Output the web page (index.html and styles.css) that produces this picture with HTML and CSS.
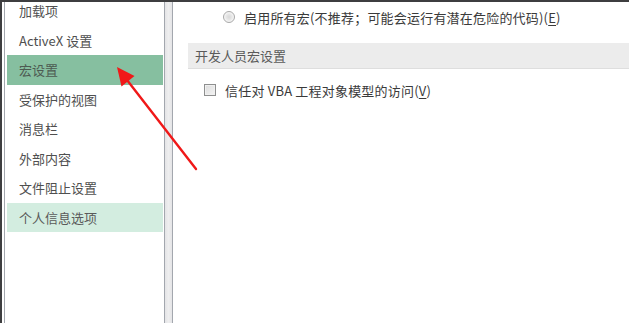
FILE: index.html
```html
<!DOCTYPE html>
<html lang="zh-CN">
<head>
<meta charset="utf-8">
<title>信任中心</title>
<link rel="stylesheet" href="styles.css">
</head>
<body>
<div class="frame">
  <div class="sidebar">
    <ul class="nav">
      <li class="nav-item">加载项</li>
      <li class="nav-item">ActiveX 设置</li>
      <li class="nav-item selected">宏设置</li>
      <li class="nav-item">受保护的视图</li>
      <li class="nav-item">消息栏</li>
      <li class="nav-item">外部内容</li>
      <li class="nav-item">文件阻止设置</li>
      <li class="nav-item hover">个人信息选项</li>
    </ul>
  </div>
  <div class="gutter"></div>
  <div class="main">
    <div class="option radio-row">
      <span class="radio"></span>
      <span class="label">启用所有宏(不推荐；可能会运行有潜在危险的代码)(<u>E</u>)</span>
    </div>
    <div class="section-header">开发人员宏设置</div>
    <div class="option check-row">
      <span class="checkbox"></span>
      <span class="label">信任对 VBA 工程对象模型的访问(<u>V</u>)</span>
    </div>
  </div>
  <svg class="arrow" width="629" height="323" viewBox="0 0 629 323">
    <line x1="196" y1="169" x2="127" y2="80" stroke="#f01818" stroke-width="2.4" stroke-linecap="round"/>
    <polygon points="117,67 134.5,76 121.5,86.5" fill="#f01818"/>
  </svg>
</div>
</body>
</html>
```
FILE: styles.css
```css
* { box-sizing: border-box; }
html, body {
  margin: 0;
  padding: 0;
  background: #ffffff;
}
body {
  font-family: "Noto Sans CJK SC", "Noto Sans", sans-serif;
  font-size: 13px;
  color: #444;
}
.frame {
  position: relative;
  width: 629px;
  height: 323px;
  overflow: hidden;
  border-top: 2px solid #3e3e40;
  border-left: 2px solid #3e3e40;
  display: flex;
  background: #fff;
}
.sidebar {
  width: 163px;
  padding-left: 2px;
  flex: none;
  display: flex;
}
.nav {
  list-style: none;
  margin: 0;
  padding: 0 1px 0 2px;
  width: 161px;
  border-left: 1px solid #a3a7ae;
  border-right: 1px solid #a3a7ae;
  overflow: hidden;
}
.nav-item {
  height: 29.5px;
  display: flex;
  align-items: center;
  padding-left: 12px;
  color: #4f4f4f;
  white-space: nowrap;
}
.nav-item:first-child { margin-top: -6px; }
.nav-item.selected { background: #86bfa0; color: #4d5a52; }
.nav-item.hover { background: #d3ede0; color: #5a5a5a; }
.gutter {
  width: 8px;
  flex: none;
  background: linear-gradient(to right, #e4e4e6, #eeeeef 50%, #e4e4e6);
  border-right: 1px solid #a3a7ae;
}
.main {
  flex: 1;
  padding-left: 15px;
  display: flex;
  flex-direction: column;
}
.option {
  height: 30px;
  display: flex;
  align-items: center;
  color: #3a3a3a;
  white-space: nowrap;
}
.option .label { letter-spacing: 0.2px; }
.radio-row { padding-left: 35px; }
.check-row { padding-left: 16px; margin-top: 6px; }
.label u { text-underline-offset: 2px; }
.radio {
  width: 12px;
  height: 12px;
  border-radius: 50%;
  border: 1px solid #a8a8a8;
  background: radial-gradient(circle at 50% 50%, #d9d9d9 0, #e4e4e4 35%, #f6f6f6 70%, #ffffff 100%);
  margin-right: 9px;
  flex: none;
}
.checkbox {
  width: 12px;
  height: 12px;
  border: 1px solid #8e8f8f;
  background: linear-gradient(135deg, #dcdcdc, #f4f4f4);
  box-shadow: inset 0 0 0 1px #f0f0f0;
  margin-right: 9px;
  flex: none;
}
.section-header {
  margin-top: 11px;
  height: 26px;
  background: #ececec;
  border-bottom: 1px solid #dedede;
  display: flex;
  align-items: center;
  padding-left: 7px;
  color: #5a5a5a;
}
.arrow {
  position: absolute;
  left: -2px;
  top: -2px;
  pointer-events: none;
}
```
